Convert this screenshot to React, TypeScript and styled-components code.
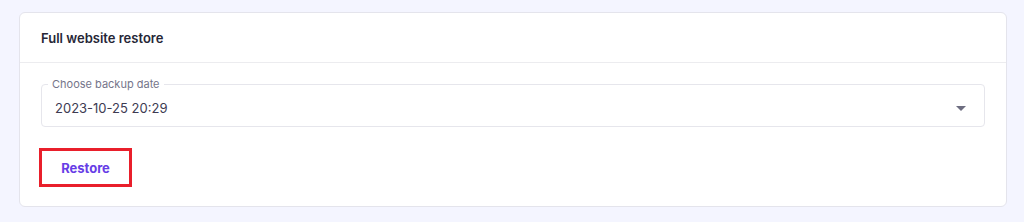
import React from "react";
import styled, { createGlobalStyle } from "styled-components";

const GlobalStyle = createGlobalStyle`
  html, body {
    margin: 0;
    padding: 0;
    background: #f4f5ff;
    font-family: "Inter", "Noto Sans", sans-serif;
  }
`;

const Page = styled.div`
  width: 1024px;
  height: 222px;
  box-sizing: border-box;
  padding: 12px 17px 0 19px;
`;

const Card = styled.section`
  background: #ffffff;
  border: 1px solid #e4e4ec;
  border-radius: 6px;
  height: 195px;
  box-sizing: border-box;
`;

const CardHeader = styled.header`
  height: 50px;
  box-sizing: border-box;
  padding: 0 0 0 21px;
  display: flex;
  align-items: center;
  border-bottom: 1px solid #ececef;
`;

const Title = styled.h2`
  margin: 0;
  font-size: 13px;
  font-weight: 600;
  color: #262636;
`;

const CardBody = styled.div`
  padding: 15px 21px 0 21px;
`;

const Field = styled.fieldset`
  margin: 0;
  padding: 0 18px 0 13px;
  height: 49px;
  box-sizing: border-box;
  border: 1px solid #e6e6ec;
  border-radius: 4px;
  display: flex;
  align-items: center;
  justify-content: space-between;
`;

const Legend = styled.legend`
  padding: 0 4px;
  margin-left: -7px;
  font-size: 11px;
  color: #75758a;
  line-height: 12px;
`;

const Value = styled.span`
  font-size: 13px;
  color: #3d3b52;
`;

const Caret = styled.span`
  width: 0;
  height: 0;
  border-left: 5px solid transparent;
  border-right: 5px solid transparent;
  border-top: 5px solid #6d6d80;
`;

const RestoreButton = styled.button`
  margin: 21px 0 0 -2px;
  width: 93px;
  height: 39px;
  box-sizing: border-box;
  border: 3px solid #e91f2b;
  background: #ffffff;
  color: #673de6;
  font-family: "Inter", "Noto Sans", sans-serif;
  font-size: 13px;
  font-weight: 700;
  cursor: pointer;
`;

export default function App() {
  return (
    <>
      <GlobalStyle />
      <Page>
        <Card>
          <CardHeader>
            <Title>Full website restore</Title>
          </CardHeader>
          <CardBody>
            <Field>
              <Legend>Choose backup date</Legend>
              <Value>2023-10-25 20:29</Value>
              <Caret />
            </Field>
            <RestoreButton type="button">Restore</RestoreButton>
          </CardBody>
        </Card>
      </Page>
    </>
  );
}
